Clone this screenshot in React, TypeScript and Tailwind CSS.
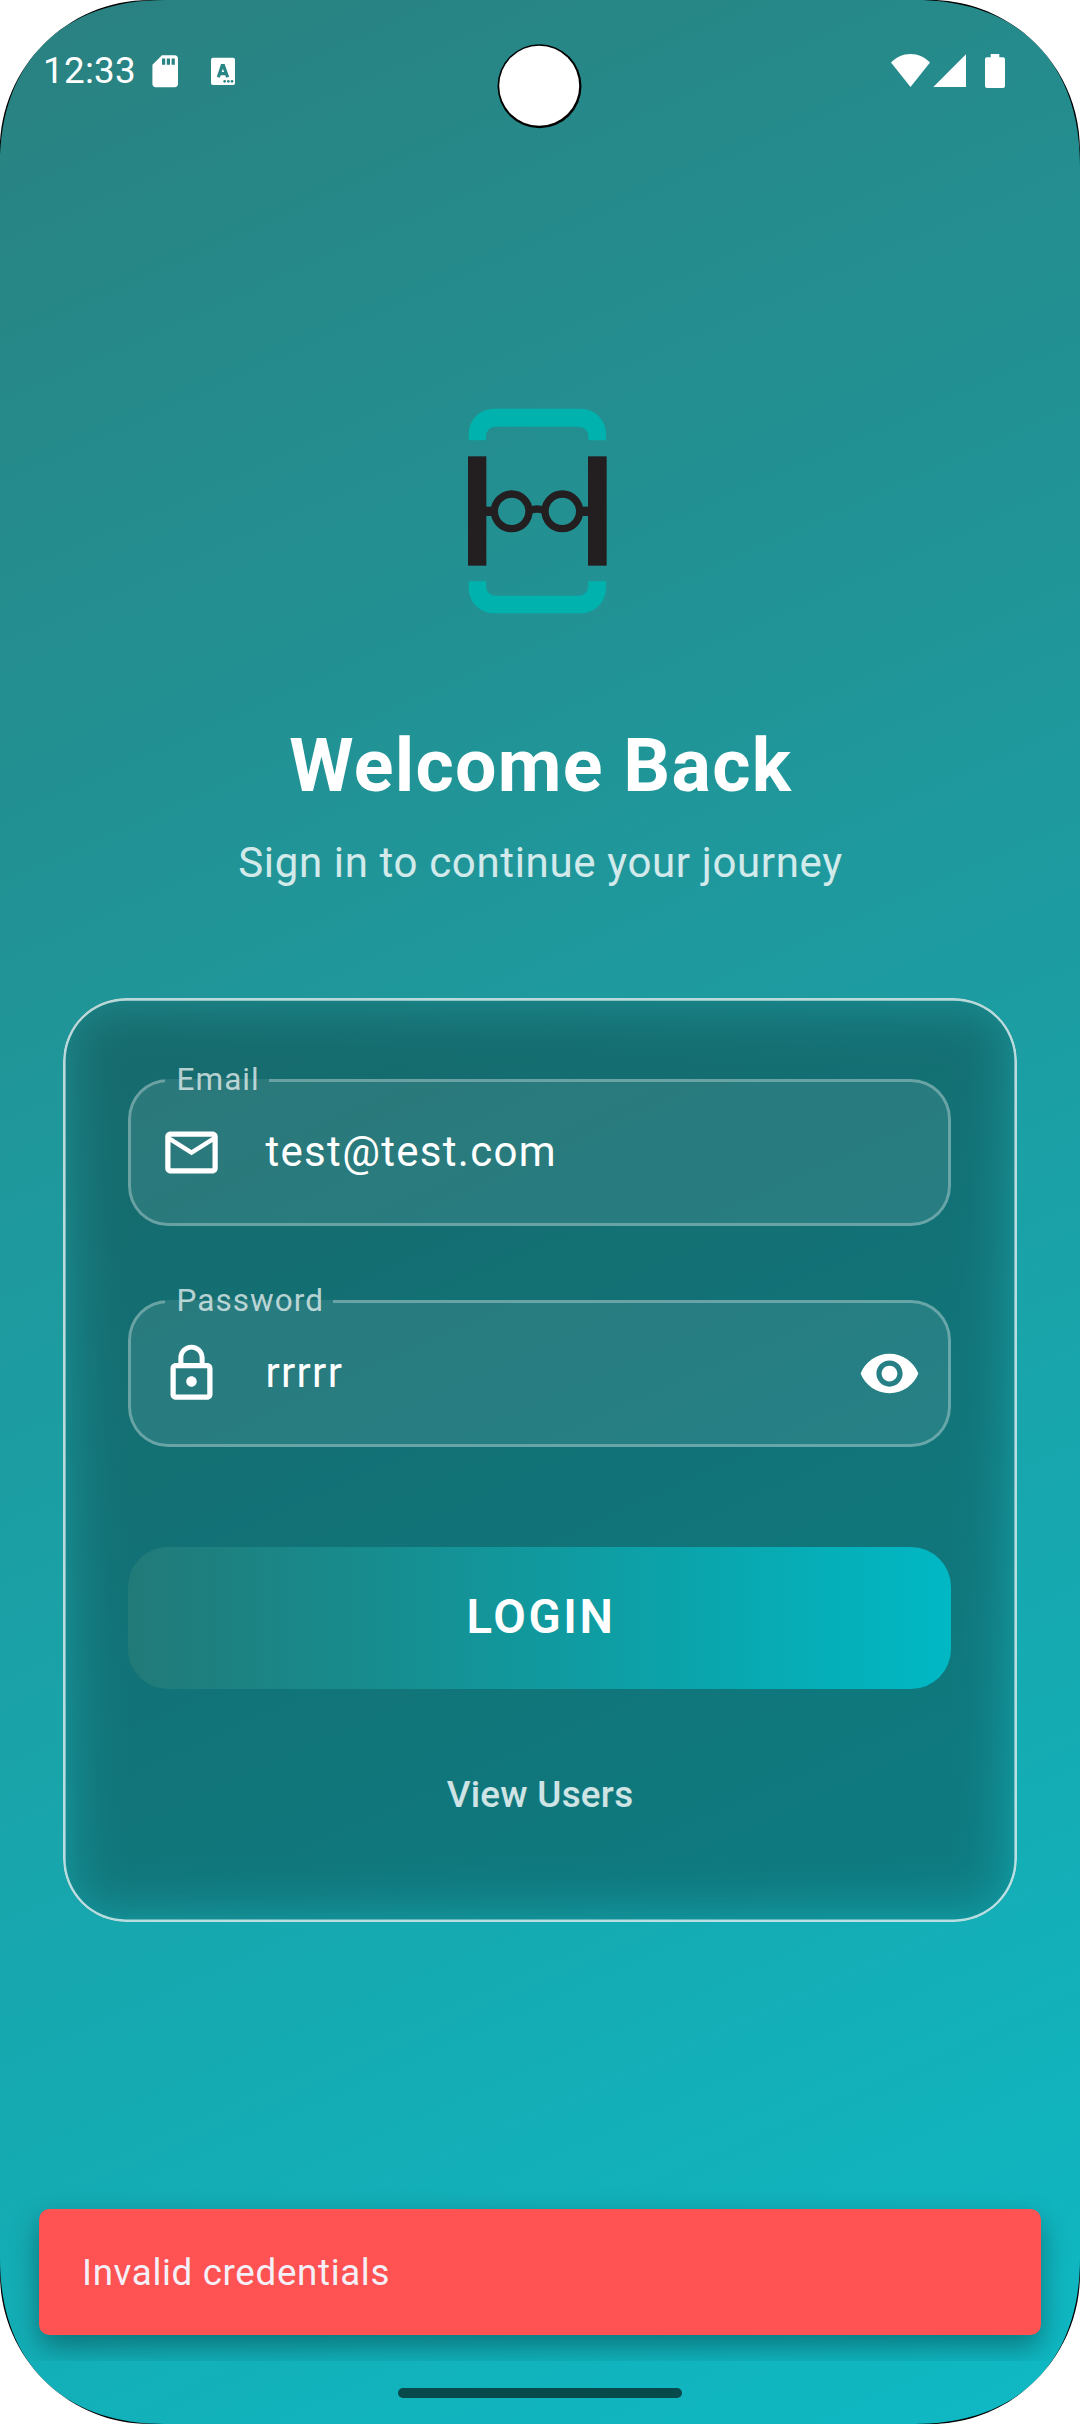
import type { ReactNode } from "react";

function Corner({ className }: { className: string }) {
  return (
    <svg className={`absolute size-[170px] ${className}`} viewBox="0 0 170 170">
      <path d="M0 165C0 62 62 0 165 0H0Z" fill="#000" />
      <path d="M0 150C0 67.2 67.2 0 150 0H0Z" fill="#fff" />
    </svg>
  );
}

function StatusBar() {
  return (
    <div className="relative flex h-[142px] items-start pl-[43px] text-white">
      <span className="mt-[49px] w-[102.600px] text-[36.75px] leading-[43px] tracking-[0.3px]">12:33</span>
      <svg className="mt-[52px] size-[38.4px]" viewBox="0 0 24 24" fill="currentColor">
        <path d="M18 2h-8L4.02 8 4 20c0 1.1.9 2 2 2h12c1.1 0 2-.9 2-2V4c0-1.1-.9-2-2-2zm-6 6h-2V4h2v4zm3 0h-2V4h2v4zm3 0h-2V4h2v4z" />
      </svg>
      <svg className="mt-[57px] ml-[27px] h-[29px] w-[26px]" viewBox="0 0 78 87">
        <rect x="0" y="2" width="72" height="82" rx="6" fill="#fff" />
        <path d="M22 61 33.500 26H37.500L50 61M27 50h18" fill="none" stroke="#298583" strokeWidth="9.500" />
        <g fill="#298583">
          <circle cx="41" cy="73" r="4" />
          <circle cx="52" cy="73" r="4" />
          <circle cx="63" cy="73" r="4" />
        </g>
      </svg>
      <svg className="mt-[54px] ml-[654px] h-[34px] w-[115px]" viewBox="0 0 115 34" fill="currentColor">
        <path d="M0 8.5C5 3.3 12 0 19.5 0S34 3.3 39 8.5L19.5 33Z" />
        <path d="M75 0.3V33H42.3Z" />
        <path d="M99.7 0h8.6v3.3h3.700a2 2 0 0 1 2 2V32a2 2 0 0 1-2 2H96a2 2 0 0 1-2-2V5.300a2 2 0 0 1 2-2h3.700Z" />
      </svg>
      <svg className="absolute top-[43px] left-[497px] size-[86px]" viewBox="0 0 86 86">
        <circle cx="42.500" cy="43.200" r="42" fill="#000" />
        <circle cx="42.200" cy="42.800" r="40" fill="#fff" />
      </svg>
    </div>
  );
}

function Logo() {
  return (
    <svg className="mx-auto mt-[238px] h-[260px] w-[200px]" viewBox="0 0 600 780">
      <g fill="#00b2ad">
        <path d="M86 181V162A76 76 0 0 1 162 86H422A76 76 0 0 1 498 162V181H445V168A28 28 0 0 0 417 140H166A28 28 0 0 0 138 168V181Z" />
        <path d="M86 604V624A76 76 0 0 0 162 700H422A76 76 0 0 0 498 624V604H445V619A28 28 0 0 1 417 647H166A28 28 0 0 1 138 619V604Z" />
      </g>
      <g fill="#231f20">
        <rect x="84" y="229" width="55" height="328" />
        <rect x="444" y="229" width="56" height="328" />
        <rect x="135" y="380" width="24" height="28" />
        <rect x="424" y="380" width="24" height="28" />
      </g>
      <g fill="none" stroke="#231f20" strokeWidth="22">
        <circle cx="215" cy="394" r="52" />
        <circle cx="367" cy="394" r="52" />
        <path d="M270 391Q291 383 312 391" />
      </g>
    </svg>
  );
}

function Icon({ d, className }: { d: string; className?: string }) {
  return (
    <svg className={`size-[63px] shrink-0 ${className ?? ""}`} viewBox="0 0 24 24" fill="#fff">
      <path d={d} />
    </svg>
  );
}

function Field({ label, value, icon, action }: { label: string; value: string; icon: string; action?: ReactNode }) {
  return (
    <fieldset className="h-[161px] w-[823px] rounded-[40px] border-[3px] border-white/30 bg-white/9 pl-[34px]">
      <legend className="h-[30px] pr-[9px] pl-[11.500px] text-[31.5px] leading-[30px] tracking-[1.05px] text-white/70">
        {label}
      </legend>
      <div className="flex h-[118px] w-full items-center pb-1">
        <Icon d={icon} className="-ml-[5px]" />
        <span className="ml-[42.500px] flex-1 text-[42px] leading-[50px] tracking-[1.3px] text-white">{value}</span>
        {action}
      </div>
    </fieldset>
  );
}

const MAIL =
  "M20 4H4c-1.100 0-2 .9-2 2v12c0 1.100.9 2 2 2h16c1.100 0 2-.9 2-2V6c0-1.100-.9-2-2-2zm0 14H4V8l8 5 8-5v10zm-8-7L4 6h16l-8 5z";
const LOCK =
  "M12 17c1.100 0 2-.9 2-2s-.9-2-2-2-2 .9-2 2 .9 2 2 2zm6-9h-1V6c0-2.760-2.240-5-5-5S7 3.240 7 6v2H6c-1.100 0-2 .9-2 2v10c0 1.100.9 2 2 2h12c1.100 0 2-.9 2-2V10c0-1.100-.9-2-2-2zM8.900 6c0-1.710 1.390-3.100 3.100-3.100s3.100 1.390 3.100 3.100v2H8.900V6zM18 20H6V10h12v10z";
const EYE =
  "M12 4.500C7 4.500 2.730 7.610 1 12c1.730 4.390 6 7.500 11 7.500s9.270-3.110 11-7.500c-1.730-4.390-6-7.500-11-7.500zM12 17c-2.760 0-5-2.240-5-5s2.240-5 5-5 5 2.240 5 5-2.240 5-5 5zm0-8c-1.660 0-3 1.340-3 3s1.340 3 3 3 3-1.340 3-3-1.340-3-3-3z";

export default function App() {
  return (
    <div className="relative flex h-[2424px] w-[1080px] flex-col overflow-hidden bg-[linear-gradient(156deg,#2a8180_0%,#0eb9c4_100%)] font-[Roboto,sans-serif]">
      <StatusBar />
      <Logo />
      <h1 className="mt-[83px] pl-[1.500px] text-center text-[73.5px] leading-[86px] font-bold tracking-[1.3px] text-white">
        Welcome Back
      </h1>
      <p className="mt-[29px] pl-px text-center text-[42px] leading-[50px] tracking-[0.65px] text-white/80">
        Sign in to continue your journey
      </p>

      <main className="relative mx-[63px] mt-[110px] flex h-[924px] flex-col items-start overflow-hidden rounded-[63px] pt-[67px] pl-[65px]">
        <div className="absolute inset-0 bg-black/29 blur-[30px]" />
        <div className="absolute inset-0 rounded-[63px] shadow-[inset_0_0_0_2.625px_rgba(255,255,255,0.7)]" />
        <div className="relative flex flex-col items-center">
          <Field label="Email" value="test@test.com" icon={MAIL} />
          <div className="h-[60px]" />
          <Field label="Password" value="rrrrr" icon={LOCK} action={<Icon d={EYE} className="mr-[27px]" />} />
          <button className="mt-[100px] h-[142px] w-[823px] rounded-[40px] bg-[linear-gradient(90deg,#217a78,#00b8c4)] pb-[2px] pl-[3px] text-[47.25px] font-semibold tracking-[2.6px] text-white">
            LOGIN
          </button>
          <button className="mt-[84px] pl-px text-[36.75px] leading-[44px] font-medium tracking-[0.3px] text-white/80">
            View Users
          </button>
        </div>
      </main>

      <div className="mt-[287px] flex h-[152px] shrink-0 px-[39px] [clip-path:inset(-60px_0_0_0)]">
        <div className="flex h-[126px] w-full items-center rounded-[10.5px] bg-[#ff5252] pt-[2px] pl-[43px] text-[36.75px] tracking-[0.65px] text-[#f5eff7] shadow-[0_12px_28px_rgba(0,0,0,0.34)]">
          Invalid credentials
        </div>
      </div>
      <div className="mx-auto mt-[27px] h-[10px] w-[284px] shrink-0 rounded-full bg-[#08494b]" />

      <Corner className="top-0 left-0" />
      <Corner className="top-0 right-0 -scale-x-100" />
      <Corner className="bottom-0 left-0 -scale-y-100" />
      <Corner className="right-0 bottom-0 rotate-180" />
    </div>
  );
}
